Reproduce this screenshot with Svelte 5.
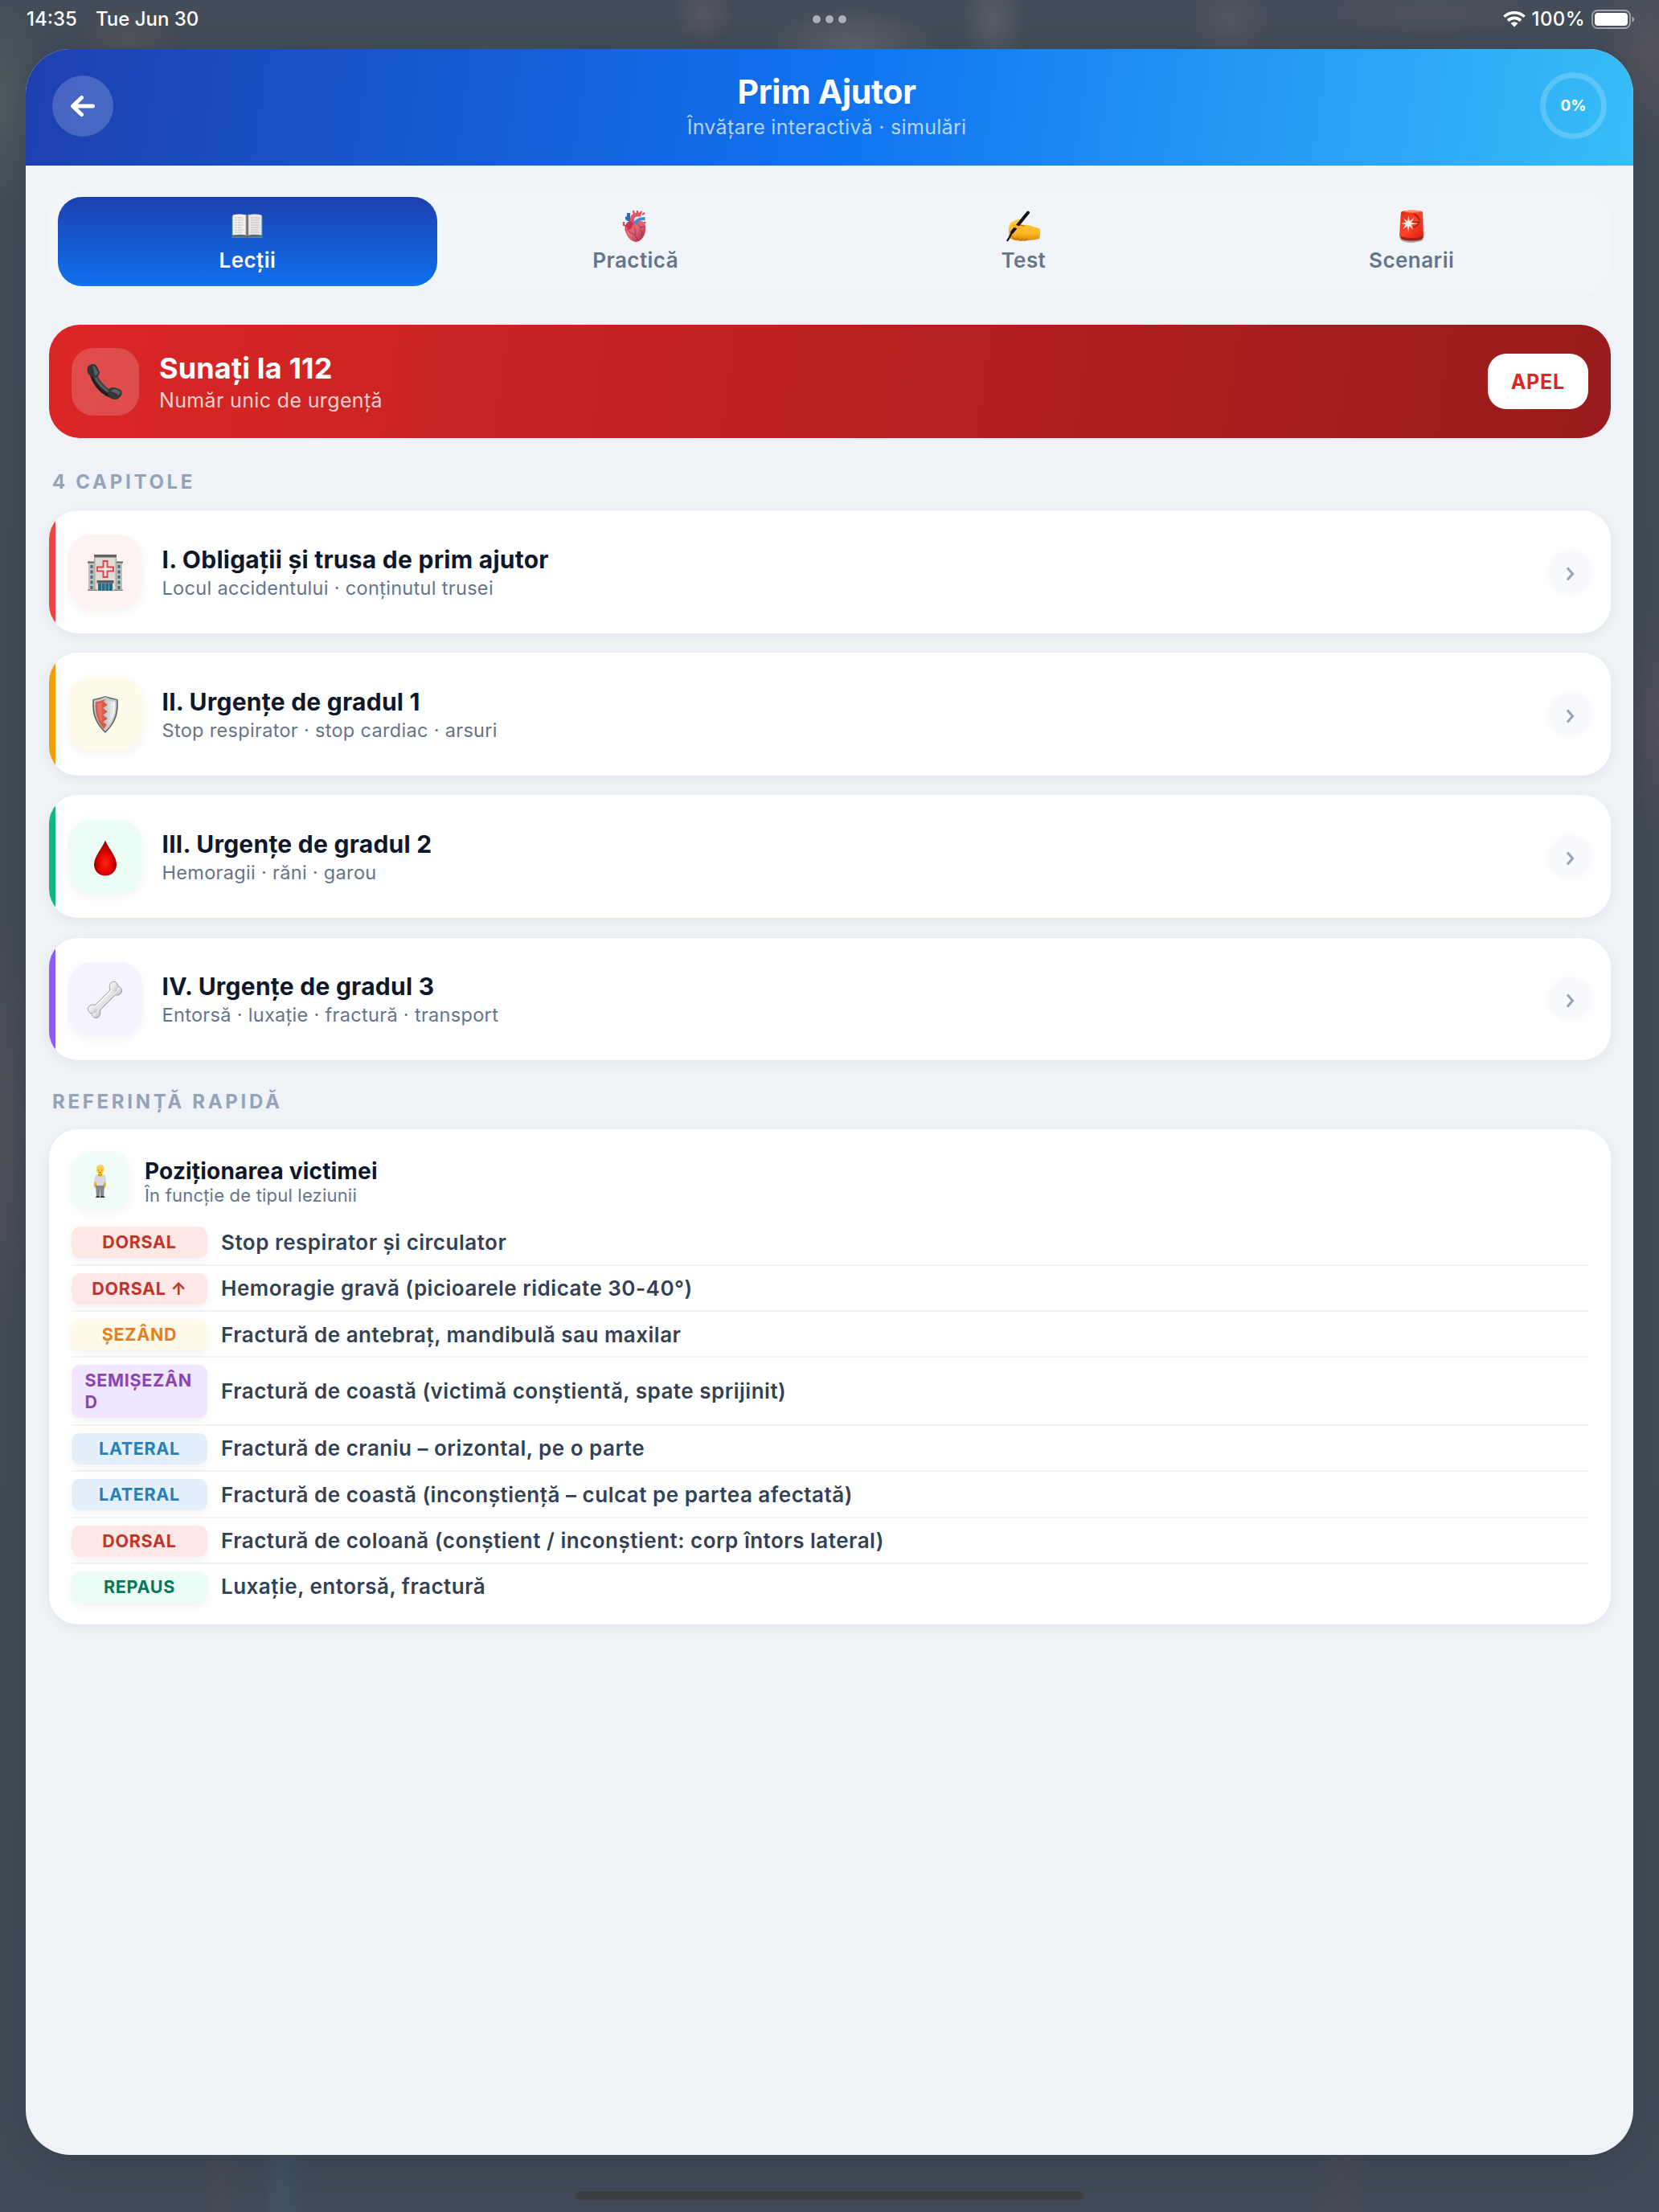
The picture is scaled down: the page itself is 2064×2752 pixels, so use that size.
<script>
  const tabs = [
    { id: "book", label: "Lecții" },
    { id: "heart", label: "Practică" },
    { id: "hand", label: "Test" },
    { id: "siren", label: "Scenarii" },
  ];

  const chapters = [
    { icon: "hospital", tone: "red", title: "I. Obligații și trusa de prim ajutor", text: "Locul accidentului · conținutul trusei" },
    { icon: "shield", tone: "amber", title: "II. Urgențe de gradul 1", text: "Stop respirator · stop cardiac · arsuri" },
    { icon: "drop", tone: "green", title: "III. Urgențe de gradul 2", text: "Hemoragii · răni · garou" },
    { icon: "bone", tone: "violet", title: "IV. Urgențe de gradul 3", text: "Entorsă · luxație · fractură · transport" },
  ];

  const positions = [
    { tag: "DORSAL", tone: "red", text: "Stop respirator și circulator" },
    { tag: "DORSAL ↑", tone: "red", text: "Hemoragie gravă (picioarele ridicate 30-40°)" },
    { tag: "ȘEZÂND", tone: "amber", text: "Fractură de antebraț, mandibulă sau maxilar" },
    { tag: "SEMIȘEZÂND", tone: "violet", text: "Fractură de coastă (victimă conștientă, spate sprijinit)" },
    { tag: "LATERAL", tone: "blue", text: "Fractură de craniu – orizontal, pe o parte" },
    { tag: "LATERAL", tone: "blue", text: "Fractură de coastă (inconștiență – culcat pe partea afectată)" },
    { tag: "DORSAL", tone: "red", text: "Fractură de coloană (conștient / inconștient: corp întors lateral)" },
    { tag: "REPAUS", tone: "green", text: "Luxație, entorsă, fractură" },
  ];

  let activeTab = $state("book");
</script>

{#snippet emoji(name)}
  <svg class="emoji" viewBox="0 0 48 48" aria-hidden="true">
    {#if name === "book"}
      <path d="M4.500 12h38v27h-38z" fill="#3a8fb0" />
      <path d="M5 35.500h37v2H26l-2.500 2-2.500-2H5z" fill="#6d604f" />
      <path d="M5.500 10.500c6-1.500 13-1.500 18 .5v25c-5-1.500-12-1.500-18-.5z" fill="#f4f2f2" />
      <path d="M41.500 10.500c-6-1.500-13-1.500-18 .5v25c5-1.500 12-1.500 18-.5z" fill="#e9e6e8" />
      <path d="M21.500 10.500l2 .5 2-.5v25.500l-2 .7-2-.7z" fill="#aaa5a5" />
      <path d="M23.500 11v25.500" stroke="#55504e" stroke-width="1.300" />
      <path d="M8 14h11M8 17h11M8 20h10M8 23h11M8 26h9M8 29h11M8 32h10M28 14h11M28 17h10M28 20h11M28 23h10M28 26h11M28 29h9M28 32h11" stroke="#bdbbc2" stroke-width="1" stroke-dasharray="3 .6 5 .6" />
    {:else if name === "heart"}
      <path d="M11 14.500h4V8M15 9v9" fill="none" stroke="#2e6bb0" stroke-width="4.200" />
      <path d="M9 19v4l6 2M36 19l-4 4" fill="none" stroke="#d4435a" stroke-width="2.200" />
      <path d="M22 10l-1-5M26 9V5M29 10l2-4M32 10l3-2" fill="none" stroke="#e04558" stroke-width="2.200" />
      <path d="M19.500 22v-6c0-4 3-6 7-6h4" fill="none" stroke="#e65364" stroke-width="5" />
      <path d="M16 18c-5 3-6 8-5 13 2 7 7 12 13 13 7-1 11-7 12-14 1-7-1-12-6-12-4 0-6 1-8 4-1-3-3-4-6-4z" fill="url(#heartFill)" />
      <path d="M16 18c-4 2-6 7-5 12 5 1 9-4 10-9-1-2-3-3-5-3z" fill="#c83355" />
      <path d="M23 22c1-5 5-7 12.500-7" fill="none" stroke="#468bcd" stroke-width="4.200" />
      <path d="M15 30c2 3 5 3 7 5s3 3 4 7M21 26c3 2 3 4 2 9M27 22c1 4 5 4 8 3M30 25c-1 3 0 5 2 7l-1 5" fill="none" stroke="#7d3560" stroke-width=".9" />
      <path d="M12.500 26c0 3 1 6 3 9" fill="none" stroke="#f0808c" stroke-width="1" />
    {:else if name === "hand"}
      <path d="M6 39c0-8-1-15 3-19 4-3 9-5 13-4 2 0 1 3-1 4l-2 2 6 1c5-1 13 3 19 4 2 4 1 9 0 13-5 1-9 2-13 2-8 1-15 1-20-1z" fill="url(#handFill)" />
      <path d="M19 23l6 1M10 37c3 4 6 5 7 2 2 3 5 4 6 1 3 3 5 2 5 0" fill="none" stroke="#c67b12" stroke-width="1.600" stroke-linecap="round" />
      <path d="M30 7.500L10 32" stroke="#101010" stroke-width="4" stroke-linecap="round" />
      <path d="M10 32l-3 6-3 5" fill="none" stroke="#101010" stroke-width="2.200" />
      <path d="M13 24l5 2" stroke="#f5af25" stroke-width="4" stroke-linecap="round" />
    {:else if name === "siren"}
      <path d="M9 36c0 3 1 6 4 7 6 3 17 2 23 0 3-1 3-4 3-7z" fill="#aaa9a1" />
      <path d="M10 35c0 3 1 5 3 6 6 2 17 2 23 0 2-1 3-3 3-6z" fill="#a81d14" />
      <path d="M11 7c1-3 26-3 27 0l1 29c-5 4-24 4-30 0z" fill="url(#sirenFill)" />
      <path d="M14 6c3-2 19-2 22 0-2 2-19 2-22 0z" fill="#ff9068" />
      <path d="M27 9c4 2 6 4 7 8M26 26c4-1 6-3 8-7l-8 1" fill="none" stroke="#ad231c" stroke-width="2" />
      <path d="M20.500 11l1.300 7 5.500-4-3.500 6 9 1-9 1.500 2.500 6-4.700-4-1.600 8-1.300-8-5.700 4 3.500-6-5.500-1.500 6-1.500-3.500-5.500 5.500 4z" fill="#ffd9cc" />
      <circle cx="20.500" cy="21" r="3" fill="#fff" />
    {:else if name === "phone"}
      <path d="M7 11c2 13 13 28 28 31" fill="none" stroke="#1f2021" stroke-width="6" />
      <path d="M9 10c3 12 12 23 25 29" fill="none" stroke="#454647" stroke-width="5.500" />
      <path d="M5 3c3-2 7-1 8 1l4 8c0 3-2 6-5 7-3 0-8-2-10-7-1-4-1-7 3-9z" fill="#343536" />
      <path d="M27 37c0-3 3-6 6-6 4 0 9 2 11 4 2 3 0 7-4 10-3 2-8 1-11-2-1-2-2-4-2-6z" fill="#353637" />
      <path d="M8 4l3 1 4 7c0 2-2 4-4 5l-1-6zM31 36c1-2 3-3 5-3l7 3-2 5-4-3z" fill="#5d5e5f" />
      <path d="M12 19c4 8 9 13 16 17" fill="none" stroke="#6c6d6e" stroke-width="1.200" />
    {:else if name === "hospital"}
      <path d="M3 13h42v34H3z" fill="#c1beb5" />
      <path d="M2 11.500h10v2H2zM36 11.500h10v2H36z" fill="#64625e" />
      <path d="M11 5h26v42H11z" fill="#dfddd6" />
      <path d="M10 3h28v3.500H10z" fill="#65615d" />
      <path d="M10 7h1.500v40H10zM36.500 7H38v40h-1.500z" fill="#aba89f" />
      <path d="M5.500 16h3v4h-3zm0 6.500h3v4h-3zm0 6.500h3v4h-3zm0 6.500h3v4h-3zm0 6.500h3v4h-3zM39.500 16h3v4h-3zm0 6.500h3v4h-3zm0 6.500h3v4h-3zm0 6.500h3v4h-3zm0 6.500h3v4h-3z" fill="#37708c" />
      <path d="M21.500 11h5v7.500H34v5h-7.500V31h-5v-7.500H14v-5h7.500z" fill="#f4e9e5" stroke="#e63f48" stroke-width="1.900" />
      <path d="M13.500 35h21v3.500h-21z" fill="#5f5d5a" />
      <path d="M15 38.500h18V48H15z" fill="#246985" />
      <path d="M19.500 38.500V48M24 38.500V48M28.500 38.500V48" stroke="#75a5b2" />
      <path d="M2 46.500h12v1.500H2zM34 46.500h12v1.500H34z" fill="#8f8b83" />
    {:else if name === "shield"}
      <path d="M8.500 6C15 5 20 3 24 2c4 1 9 3 15.500 4 1 14 0 27-15.500 42C8.500 33 7.500 20 8.500 6z" fill="#5e6061" />
      <path d="M10 7c5-1 10-2 14-4 4 2 9 3 14 4 1 13-1 26-14 39C11 33 9 20 10 7z" fill="#c6c9ca" />
      <path d="M12 9c4 0 8-2 12-3 4 1 8 3 12 3 1 12-1 23-12 34C13 32 11 21 12 9z" fill="url(#shieldWhite)" />
      <path d="M12 9c4 0 8-2 12-3l-2 3 5 4-6 4 6 4.500-6 4 6 4.500-6 4 5 3.500-4 5.500C13 32 11 21 12 9z" fill="#db5948" />
      <path d="M14 11c3 0 5-1 6-1.500V35c-5-7-6-16-6-24z" fill="#ef8070" opacity=".6" />
    {:else if name === "drop"}
      <path d="M24 3.500c4 10 14 20 14 30 0 8-6 14-14 14s-14-6-14-14c0-10 10-20 14-30z" fill="url(#dropFill)" />
    {:else if name === "bone"}
      <g fill="#8f8f92" stroke="#8f8f92">
        <path d="M35 14L13 36" stroke-width="9.500" />
        <ellipse cx="34.500" cy="9" rx="5.300" ry="6.800" />
        <ellipse cx="38.500" cy="13.500" rx="6" ry="5.600" />
        <ellipse cx="8.500" cy="36.500" rx="6" ry="5.600" />
        <ellipse cx="12.500" cy="41" rx="5.300" ry="6.300" />
      </g>
      <g fill="url(#boneFill)">
        <ellipse cx="38.500" cy="13.500" rx="5.700" ry="5.300" />
        <ellipse cx="34.500" cy="9" rx="5" ry="6.500" />
        <ellipse cx="12.500" cy="41" rx="5" ry="6" />
        <ellipse cx="8.500" cy="36.500" rx="5.700" ry="5.300" />
      </g>
      <path d="M35 14L13 36" stroke="#e2e2e3" stroke-width="8" />
      <path d="M32 13L12 33" stroke="#f9f9f9" stroke-width="2" />
    {:else}
      <path d="M17 20h3v8l-1 5c-3 0-4-3-3-5zM27 20h3l1 8c0 3-1 5-3 5l-1-5z" fill="#f4bd22" />
      <path d="M18 28h11l-1 16h-4l-.5-12-.5 12h-4z" fill="#85858a" />
      <path d="M18 17c3-2 9-2 12 0l1 8-3 1v4h-9v-4l-3-1z" fill="#d9d9df" />
      <path d="M19 43h4v2h-5zM24 43h4l2 2h-6z" fill="#3c3839" />
      <path d="M21 14h5v4c-2 1-4 1-5 0z" fill="#eaa719" />
      <circle cx="23.500" cy="10.500" r="4.800" fill="#ffd22f" />
      <path d="M19 10c-1-4 2-6 5-6 3 0 5 2 4.500 6-2-3-5-3-6-3-2 0-3 1-3.500 3z" fill="#f3cf78" />
      <path d="M21.500 10.500v1M25.500 10.500v1M22.500 13.500h2" stroke="#7c4b17" />
    {/if}
  </svg>
{/snippet}

<svg class="defs" aria-hidden="true">
  <defs>
    <linearGradient id="heartFill" x1="0" y1="0" x2="1" y2="1">
      <stop offset="0" stop-color="#ee5b6c" />
      <stop offset=".5" stop-color="#e2646c" />
      <stop offset="1" stop-color="#a91c3b" />
    </linearGradient>
    <linearGradient id="handFill" x1="0" y1="0" x2="0" y2="1">
      <stop offset="0" stop-color="#ffcf3a" />
      <stop offset=".65" stop-color="#fbb822" />
      <stop offset="1" stop-color="#d98915" />
    </linearGradient>
    <linearGradient id="sirenFill" x1="0" y1="0" x2="1" y2="1">
      <stop offset="0" stop-color="#e5230f" />
      <stop offset=".5" stop-color="#ff432a" />
      <stop offset="1" stop-color="#db1e12" />
    </linearGradient>
    <linearGradient id="shieldWhite">
      <stop offset=".4" stop-color="#b6bdc1" />
      <stop offset="1" stop-color="#fafafa" />
    </linearGradient>
    <radialGradient id="dropFill" cx=".5" cy=".65" r=".55">
      <stop offset="0" stop-color="#ff2618" />
      <stop offset=".5" stop-color="#e80500" />
      <stop offset="1" stop-color="#8d0000" />
    </radialGradient>
    <linearGradient id="boneFill" x1="0" y1="0" x2="1" y2="1">
      <stop offset="0" stop-color="#fafafa" />
      <stop offset=".5" stop-color="#e8e8e9" />
      <stop offset="1" stop-color="#b3b3b5" />
    </linearGradient>
  </defs>
</svg>

<div class="screen">
  <div class="statusbar">
    <div class="statusbar__left">
      <span class="time">14:35</span>
      <span class="date">Tue Jun 30</span>
    </div>
    <div class="statusbar__dots"><i></i><i></i><i></i></div>
    <div class="statusbar__right">
      <svg class="wifi" viewBox="0 0 28 20" aria-hidden="true">
        <path d="M1.500 6.800a18 18 0 0 1 25 0M6 11.600a11.500 11.500 0 0 1 16 0" fill="none" stroke="#fff" stroke-width="3.600" />
        <path d="M14 19.600l-4.500-4.500a6.400 6.400 0 0 1 9 0z" fill="#fff" />
      </svg>
      <span class="percent">100%</span>
      <svg class="battery" viewBox="0 0 54 24" aria-hidden="true">
        <rect x="1" y="1" width="47" height="22" rx="6.500" fill="none" stroke="#fff" stroke-opacity=".5" stroke-width="1.800" />
        <rect x="4" y="4" width="41" height="16" rx="4" fill="#fff" />
        <path d="M50.500 8.500c3.500 1 3.500 6 0 7z" fill="#fff" fill-opacity=".5" />
      </svg>
    </div>
  </div>

  <main class="window">
    <header class="header">
      <button type="button" class="back" aria-label="Înapoi">
        <svg viewBox="0 0 32 28" aria-hidden="true">
          <path d="M14.500 3.500L3.500 14l11 10.500M4 14h24.500" />
        </svg>
      </button>
      <div class="header__text">
        <h1>Prim Ajutor</h1>
        <p>Învățare interactivă · simulări</p>
      </div>
      <div class="progress"><span>0%</span></div>
    </header>

    <div class="content">
      <nav class="tabs">
        {#each tabs as tab (tab.id)}
          <button type="button" class="tab" class:active={activeTab === tab.id} onclick={() => (activeTab = tab.id)}>
            {@render emoji(tab.id)}
            <span>{tab.label}</span>
          </button>
        {/each}
      </nav>

      <section class="emergency">
        <div class="emergency__icon">{@render emoji("phone")}</div>
        <div class="emergency__text">
          <h2>Sunați la 112</h2>
          <p>Număr unic de urgență</p>
        </div>
        <button type="button" class="call"><span>APEL</span></button>
      </section>

      <h3 class="label label--chapters">4 CAPITOLE</h3>
      <div class="chapters">
        {#each chapters as chapter (chapter.icon)}
          <article class="chapter {chapter.tone}">
            <div class="chapter__icon">{@render emoji(chapter.icon)}</div>
            <div class="chapter__text">
              <h4>{chapter.title}</h4>
              <p>{chapter.text}</p>
            </div>
            <div class="chapter__go">
              <svg viewBox="0 0 12 18" aria-hidden="true"><path d="M2 1.500l6.500 7.500L2 16.500" /></svg>
            </div>
          </article>
        {/each}
      </div>

      <h3 class="label label--reference">REFERINȚĂ RAPIDĂ</h3>
      <section class="reference">
        <div class="reference__head">
          <div class="reference__icon">{@render emoji("person")}</div>
          <div class="reference__text">
            <h4>Poziționarea victimei</h4>
            <p>În funcție de tipul leziunii</p>
          </div>
        </div>
        {#each positions as position}
          <div class="row">
            <div class="tag {position.tone}"><span>{position.tag}</span></div>
            <span class="row__text">{position.text}</span>
          </div>
        {/each}
      </section>
    </div>
  </main>

  <div class="home"></div>
</div>

<style>
  :global(body) {
    background: #434d59;
  }

  h1, h2, h3, h4, p {
    margin: 0;
  }

  button {
    border: none;
    padding: 0;
    font: inherit;
  }

  .defs {
    position: absolute;
    width: 0;
    height: 0;
  }

  .screen {
    box-sizing: border-box;
    height: 2752px;
    overflow: hidden;
    display: flex;
    flex-direction: column;
    font-family: Inter, "Liberation Sans", sans-serif;
    background:
      radial-gradient(40px 70px at 1235px 30px, #545d68, transparent),
      radial-gradient(110px 50px at 1060px 60px, #5d656e, transparent),
      radial-gradient(35px 40px at 875px 18px, #565662, transparent),
      radial-gradient(60px 40px at 160px 50px, #54545a, transparent),
      radial-gradient(130px 30px at 1780px 15px, #50535e, transparent),
      radial-gradient(50px 50px at 1530px 25px, #525762, transparent),
      radial-gradient(60px 110px at 2050px 70px, #55535d, transparent),
      radial-gradient(60px 130px at 0 130px, #505c61, transparent),
      radial-gradient(40px 140px at 2064px 900px, #564f5c, transparent),
      radial-gradient(40px 260px at 0 1400px, #53525c, transparent),
      linear-gradient(92deg, transparent 260px, #484b56 275px, transparent 295px, transparent 325px, #42526400 330px, #425264 350px, transparent 380px, transparent 1640px, #484b56 1670px, transparent 1700px) 0 100% / 100% 90px no-repeat,
      linear-gradient(180deg, #434d59, #424c57 60%, #414b57);
  }

  .emoji {
    display: block;
    flex: none;
    width: 48px;
    height: 48px;
  }

  .statusbar {
    flex: none;
    display: grid;
    grid-template-columns: 1fr auto 1fr;
    align-items: center;
    height: 48px;
    padding: 0 30px 12.5px;
    color: #fff;
    font-size: 24px;
    line-height: 48px;
    font-weight: 500;
  }

  .statusbar__left,
  .statusbar__right {
    display: flex;
    align-items: center;
  }

  .statusbar__left {
    gap: 23px;
    padding-left: 3px;
  }

  .statusbar__right {
    justify-content: flex-end;
  }

  .statusbar__dots {
    display: flex;
    gap: 6px;
  }

  .statusbar__dots i {
    width: 10px;
    height: 10px;
    border-radius: 50%;
    background: #a9b0ba;
  }

  .percent {
    letter-spacing: 0.4px;
  }

  .wifi {
    width: 28px;
    height: 20px;
    margin-right: 8px;
  }

  .battery {
    width: 54px;
    height: 24px;
    margin-left: 8px;
  }

  .window {
    box-sizing: border-box;
    flex: none;
    height: 2620.500px;
    margin: 0 32px;
    overflow: hidden;
    border-radius: 56px;
    background: #eff3f8;
    box-shadow: 0 10px 50px rgba(15, 23, 42, 0.2);
  }

  .header {
    box-sizing: border-box;
    display: flex;
    align-items: center;
    height: 145.500px;
    padding: 0 33px 3px;
    background: linear-gradient(98deg, #1e40af 0%, #0f72f0 50%, #38bdf8 100%);
    color: #fff;
  }

  .back {
    display: grid;
    place-items: center;
    width: 76px;
    height: 76px;
    border-radius: 50%;
    background: rgba(255, 255, 255, 0.19);
  }

  .back svg {
    width: 32px;
    height: 28px;
    fill: none;
    stroke: #fff;
    stroke-width: 5;
    stroke-linecap: round;
    stroke-linejoin: round;
  }

  .header__text {
    flex: 1;
    text-align: center;
  }

  .header__text h1 {
    font-size: 41px;
    line-height: 48px;
    font-weight: 700;
    letter-spacing: -0.3px;
  }

  .header__text p {
    margin-top: 4px;
    font-size: 25px;
    line-height: 32px;
    letter-spacing: 0.3px;
    color: rgba(255, 255, 255, 0.7);
  }

  .progress {
    box-sizing: border-box;
    display: grid;
    place-items: center;
    width: 83px;
    height: 83px;
    border: 7px solid rgba(255, 255, 255, 0.2);
    border-radius: 50%;
    font-size: 19px;
    font-weight: 700;
  }

  .content {
    padding: 28px 28.500px 0;
  }

  .tabs {
    display: flex;
    gap: 10px;
    box-sizing: border-box;
    height: 133px;
    padding: 11px;
    border-radius: 38px;
    background: #f1f4f9;
  }

  .tab {
    flex: 1;
    display: flex;
    flex-direction: column;
    align-items: center;
    gap: 4px;
    padding-top: 12px;
    border-radius: 30px;
    background: transparent;
    color: #64748b;
    font-size: 26px;
    line-height: 30px;
    font-weight: 600;
    letter-spacing: 0.45px;
  }

  .tab.active {
    background: linear-gradient(180deg, #1e40af, #0f70ee);
    color: #fff;
  }

  .emergency {
    display: flex;
    align-items: center;
    box-sizing: border-box;
    height: 141px;
    margin-top: 37px;
    padding: 0 27.500px 0 28.500px;
    border-radius: 38px;
    background: linear-gradient(98deg, #dc2626, #991b1b);
    color: #fff;
  }

  .emergency__icon {
    display: grid;
    place-items: center;
    width: 84px;
    height: 84px;
    border-radius: 27px;
    background: rgba(255, 255, 255, 0.18);
  }

  .emergency__text {
    flex: 1;
    margin-left: 25px;
  }

  .emergency__text h2 {
    font-size: 36px;
    line-height: 44px;
    font-weight: 700;
    letter-spacing: 0.15px;
  }

  .emergency__text p {
    margin-top: 2px;
    font-size: 25px;
    line-height: 32px;
    letter-spacing: 0.35px;
    color: rgba(255, 255, 255, 0.8);
  }

  .call {
    width: 125.500px;
    height: 69px;
    border-radius: 23px;
    background: #fff;
    color: #dc2626;
    font-size: 25px;
    font-weight: 700;
    letter-spacing: 0.7px;
  }

  .label {
    padding-left: 4.500px;
    font-size: 24px;
    line-height: 30px;
    font-weight: 700;
    letter-spacing: 3.700px;
    color: #94a3b8;
  }

  .label--chapters {
    margin: 39.500px 0 20.500px;
  }

  .label--reference {
    margin: 36.500px 0 19px;
  }

  .chapters {
    display: flex;
    flex-direction: column;
    gap: 24.700px;
  }

  .chapter {
    position: relative;
    display: flex;
    align-items: center;
    box-sizing: border-box;
    height: 152.500px;
    padding: 0 24px 0 24.500px;
    overflow: hidden;
    border-radius: 36px;
    background: #fff;
    box-shadow: 0 4px 16px rgba(15, 23, 42, 0.06);
  }

  .chapter::before {
    content: "";
    position: absolute;
    inset: 0 auto 0 0;
    width: 8.500px;
    background: var(--accent);
  }

  .chapter__icon {
    display: grid;
    place-items: center;
    width: 92px;
    height: 92px;
    border-radius: 29px;
    background: var(--tint);
    box-shadow: 0 4px 12px rgba(15, 23, 42, 0.05);
  }

  .chapter.red { --accent: #ef4444; --tint: #fef2f2; }
  .chapter.amber { --accent: #f59e0b; --tint: #fffbeb; }
  .chapter.green { --accent: #10b981; --tint: #ecfdf5; }
  .chapter.violet { --accent: #8b5cf6; --tint: #f5f3ff; }

  .chapter__text {
    flex: 1;
    margin-left: 24.500px;
    padding-top: 1px;
  }

  .chapter__text h4 {
    font-size: 30px;
    line-height: 40px;
    font-weight: 700;
    letter-spacing: 0.25px;
    color: #0f172a;
  }

  .chapter__text p {
    font-size: 23.500px;
    line-height: 32px;
    letter-spacing: 0.32px;
    color: #64748b;
  }

  .chapter__go {
    display: grid;
    place-items: center;
    width: 53px;
    height: 53px;
    border-radius: 50%;
    background: #f8f9fd;
    box-shadow: 0 1px 10px rgba(15, 23, 42, 0.03);
  }

  .chapter__go svg {
    width: 12px;
    height: 18px;
    margin-top: 5px;
    margin-left: 2px;
    fill: none;
    stroke: #94a3b8;
    stroke-width: 3;
  }

  .reference {
    box-sizing: border-box;
    height: 616px;
    padding: 28px 28px 0 28.500px;
    border-radius: 36px;
    background: #fff;
    box-shadow: 0 4px 16px rgba(15, 23, 42, 0.06);
  }

  .reference__head {
    display: flex;
    align-items: center;
    margin-bottom: 12.700px;
  }

  .reference__icon {
    display: grid;
    place-items: center;
    width: 72px;
    height: 72px;
    border-radius: 22px;
    background: #f0fdfa;
    box-shadow: 0 4px 12px rgba(15, 23, 42, 0.05);
  }

  .reference__text {
    margin-left: 19px;
    padding-top: 3px;
  }

  .reference__text h4 {
    font-size: 28px;
    line-height: 34px;
    font-weight: 700;
    letter-spacing: 0.18px;
    color: #0f172a;
  }

  .reference__text p {
    font-size: 22px;
    line-height: 27px;
    letter-spacing: 0.2px;
    color: #64748b;
  }

  .row {
    display: flex;
    align-items: center;
    gap: 17px;
    padding: 9px 0 7.400px;
    border-bottom: 2px solid #f0f2f6;
  }

  .row:last-child {
    border-bottom: none;
  }

  .tag {
    box-sizing: border-box;
    display: flex;
    justify-content: center;
    width: 169px;
    padding: 6px 16.500px;
    border-radius: 11px;
    box-shadow: 0 4px 10px rgba(15, 23, 42, 0.05);
    font-size: 21.500px;
    line-height: 27px;
    font-weight: 700;
    letter-spacing: 0.7px;
    overflow-wrap: anywhere;
  }

  .tag.red { background: #fde8e6; color: #c0342b; }
  .tag.amber { background: #fffaea; color: #e67e22; }
  .tag.violet { background: #f0e6ff; color: #8e44ad; }
  .tag.blue { background: #e3effb; color: #2980b9; }
  .tag.green { background: #ecfdf5; color: #047857; }

  .row__text {
    font-size: 26px;
    line-height: 32px;
    font-weight: 600;
    letter-spacing: 0.5px;
    color: #334155;
  }

  .home {
    flex: none;
    width: 632px;
    height: 11px;
    margin: 45px auto 0;
    border-radius: 6px;
    background: #3c3f44;
  }
</style>
